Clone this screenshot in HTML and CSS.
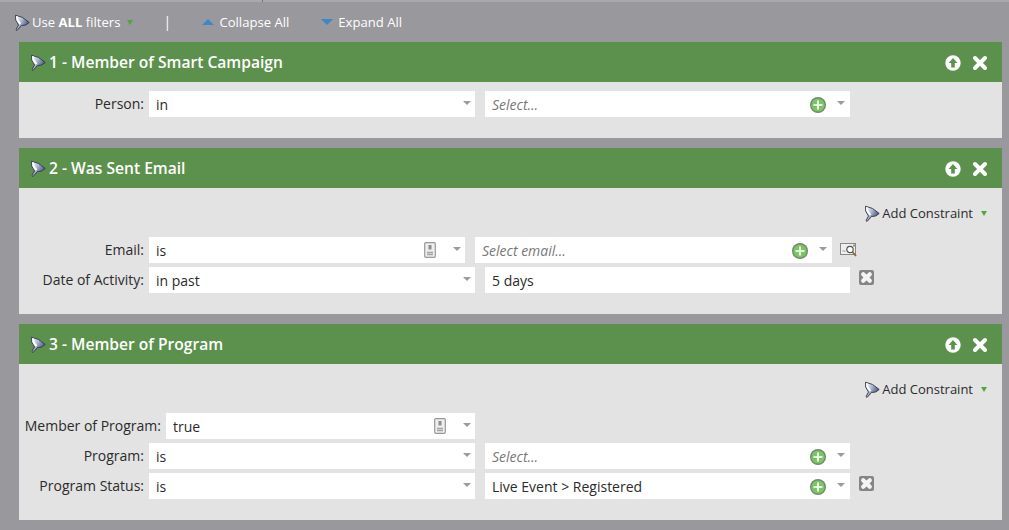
FILE: index.html
```html
<!DOCTYPE html>
<html lang="en">
<head>
<meta charset="utf-8">
<title>Smart List Filters</title>
<link rel="stylesheet" href="styles.css">
</head>
<body>
<svg class="defs" width="0" height="0" aria-hidden="true">
  <defs>
    <linearGradient id="fg" x1="0" y1="0" x2="1" y2=".6">
      <stop offset="0" stop-color="#ffffff"/><stop offset=".45" stop-color="#b4c0d6"/><stop offset="1" stop-color="#3a4a6e"/>
    </linearGradient>
    <symbol id="funnel" viewBox="0 0 16 17">
      <path d="M1.5 1.2 Q8.5 2 15.2 8.5 Q12 12 7.5 11.5 L3 16.5 L2 15.6 L4.5 11 Q.3 6 1.5 1.2Z" fill="url(#fg)" stroke="#30364a" stroke-width=".9" stroke-linejoin="round"/>
      <path d="M3 2.5 Q3 6.5 6.5 10" fill="none" stroke="#fff" stroke-width="1.8"/>
    </symbol>
    <symbol id="plus" viewBox="0 0 16 16">
      <circle cx="8" cy="8" r="8" fill="#74886e"/>
      <circle cx="8" cy="8" r="6.6" fill="#78c765"/>
      <path d="M8 3.5v9M3.5 8h9" stroke="#eafbe4" stroke-width="2"/>
    </symbol>
    <symbol id="doc" viewBox="0 0 12 16">
      <rect x=".7" y=".7" width="10.6" height="14.6" rx="1" fill="#eee" stroke="#999" stroke-width="1.2"/>
      <rect x="4.5" y="3" width="3" height="4.5" fill="#8d8d8d"/>
      <path d="M3 10.5h6M3 12.5h6" stroke="#a5a5a5" stroke-width="1.4"/>
    </symbol>
    <symbol id="up" viewBox="0 0 16 16">
      <circle cx="8" cy="8" r="7.7" fill="#fff"/>
      <path d="M8 3 L12.4 8 H9.8 V12.5 H6.2 V8 H3.6Z" fill="#5b914c"/>
    </symbol>
    <symbol id="close" viewBox="0 0 16 16">
      <path d="M3 3 L13 13 M13 3 L3 13" stroke="#fff" stroke-width="4" stroke-linecap="round"/>
    </symbol>
    <symbol id="picker" viewBox="0 0 18 16">
      <rect x=".5" y="1.5" width="15" height="11" fill="#efefef" stroke="#888"/>
      <path d="M2.5 9h3" stroke="#999"/>
      <circle cx="10" cy="7.5" r="3.2" fill="#fff" stroke="#555" stroke-width="1.2"/>
      <path d="M12.5 10 L16 14" stroke="#8a6a30" stroke-width="1.8"/>
      <rect x="13" y="2.5" width="2" height="2" fill="#8fa15a"/>
    </symbol>
    <symbol id="remove" viewBox="0 0 15 15">
      <rect x="0" y="0" width="15" height="15" rx="2" fill="#858585"/>
      <path d="M4.2 4.2 L10.8 10.8 M10.8 4.2 L4.2 10.8" stroke="#f4f4f4" stroke-width="4.2" stroke-linecap="round"/>
    </symbol>
  </defs>
</svg>

<div class="topstrip"></div>
<nav class="toolbar">
  <span class="tool tool-rule"><svg class="ic-funnel"><use href="#funnel"/></svg>Use&nbsp;<b>ALL</b>&nbsp;filters<i class="green-caret"></i></span>
  <span class="divider">|</span>
  <span class="tool tool-collapse"><i class="tri tri-up"></i>Collapse All</span>
  <span class="tool"><i class="tri tri-down"></i>Expand All</span>
</nav>

<main class="cards">
  <section class="card card-1">
    <header class="card-head">
      <svg class="ic-funnel"><use href="#funnel"/></svg><h2>1 - Member of Smart Campaign</h2>
      <svg class="ic-head"><use href="#up"/></svg><svg class="ic-head ic-close"><use href="#close"/></svg>
    </header>
    <div class="card-body">
      <div class="row">
        <label class="lbl">Person:</label>
        <div class="field w326"><span class="val">in</span><i class="caret"></i></div>
        <div class="field w365"><em class="ph">Select...</em><svg class="ic-plus"><use href="#plus"/></svg><i class="caret"></i></div>
      </div>
    </div>
  </section>

  <section class="card card-2">
    <header class="card-head">
      <svg class="ic-funnel"><use href="#funnel"/></svg><h2>2 - Was Sent Email</h2>
      <svg class="ic-head"><use href="#up"/></svg><svg class="ic-head ic-close"><use href="#close"/></svg>
    </header>
    <div class="card-body">
      <div class="constraint"><svg class="ic-funnel"><use href="#funnel"/></svg>Add Constraint<i class="green-caret"></i></div>
      <div class="row">
        <label class="lbl">Email:</label>
        <div class="field w316"><span class="val">is</span><svg class="ic-doc"><use href="#doc"/></svg><i class="caret"></i></div>
        <div class="field w357"><em class="ph">Select email...</em><svg class="ic-plus"><use href="#plus"/></svg><i class="caret"></i></div>
        <svg class="ic-picker"><use href="#picker"/></svg>
      </div>
      <div class="row">
        <label class="lbl">Date of Activity:</label>
        <div class="field w326"><span class="val">in past</span><i class="caret"></i></div>
        <div class="field w365"><span class="val">5 days</span></div>
        <svg class="ic-remove"><use href="#remove"/></svg>
      </div>
    </div>
  </section>

  <section class="card card-3">
    <header class="card-head">
      <svg class="ic-funnel"><use href="#funnel"/></svg><h2>3 - Member of Program</h2>
      <svg class="ic-head"><use href="#up"/></svg><svg class="ic-head ic-close"><use href="#close"/></svg>
    </header>
    <div class="card-body">
      <div class="constraint"><svg class="ic-funnel"><use href="#funnel"/></svg>Add Constraint<i class="green-caret"></i></div>
      <div class="row">
        <label class="lbl lbl-wide">Member of Program:</label>
        <div class="field w309"><span class="val">true</span><svg class="ic-doc"><use href="#doc"/></svg><i class="caret"></i></div>
      </div>
      <div class="row">
        <label class="lbl">Program:</label>
        <div class="field w326"><span class="val">is</span><i class="caret"></i></div>
        <div class="field w365"><em class="ph">Select...</em><svg class="ic-plus"><use href="#plus"/></svg><i class="caret"></i></div>
      </div>
      <div class="row">
        <label class="lbl">Program Status:</label>
        <div class="field w326"><span class="val">is</span><i class="caret"></i></div>
        <div class="field w365"><span class="val">Live Event &gt; Registered</span><svg class="ic-plus"><use href="#plus"/></svg><i class="caret"></i></div>
        <svg class="ic-remove"><use href="#remove"/></svg>
      </div>
    </div>
  </section>
</main>
</body>
</html>
```

FILE: styles.css
```css
* { box-sizing: border-box; }
html, body { margin: 0; height: 100%; }
body {
  background: #99989c;
  font-family: "Open Sans", "Noto Sans", sans-serif;
  font-size: 14px;
  line-height: 20px;
  color: #2b2b2b;
  overflow: hidden;
}
.defs { position: absolute; }
.topstrip {
  height: 2px;
  background: linear-gradient(to right, #a9a9ab 262px, #77767a 262px, #77767a 263px, #a9a9ab 263px);
}
.toolbar {
  height: 40px;
  display: flex;
  align-items: center;
  padding: 0 0 0 14px;
  color: #fff;
  font-size: 13.1px;
}
.toolbar .tool { display: flex; align-items: center; white-space: pre; }
.toolbar b { font-weight: 700; }
.toolbar .ic-funnel { margin-right: 2px; }
.divider { margin-left: 30px; width: 39px; color: #fff; font-size: 14px; }
.tool-collapse { margin-right: 32px; }
.ic-funnel { width: 16px; height: 17px; flex: none; }
.tri { display: inline-block; width: 0; height: 0; margin-right: 5px; }
.tri-up { border: 6px solid transparent; border-top: 0; border-bottom: 6px solid #3f86c5; }
.tri-down { border: 6px solid transparent; border-bottom: 0; border-top: 6px solid #3f86c5; }
.green-caret {
  display: inline-block; width: 0; height: 0; margin-left: 7px;
  border: 3.5px solid transparent; border-bottom: 0; border-top: 5px solid #55a53e;
}
.constraint .green-caret { margin-left: 8px; }
.cards { padding: 0 7px 0 19px; display: flex; flex-direction: column; gap: 10px; }
.card { background: #e3e3e3; }
.card-head {
  height: 40px;
  background: #5b914c;
  color: #fff;
  display: flex;
  align-items: center;
  padding: 0 14px 0 11px;
}
.card-head h2 { margin: 0 auto 0 3px; font-size: 15.6px; font-weight: 600; line-height: 22px; }
.ic-head { width: 16px; height: 16px; flex: none; margin-top: 1px; }
.ic-close { margin-left: 11px; }
.card-body { padding: 9px 0 0; }
.card-1 .card-body { height: 56px; }
.card-2 .card-body { height: 126px; }
.card-3 .card-body { height: 156px; }
.constraint {
  height: 40px;
  display: flex;
  align-items: center;
  justify-content: flex-end;
  padding: 0 15px 8px 0;
  font-size: 13px;
  color: #2b2b2b;
}
.constraint .ic-funnel { margin-right: 2px; }
.row { display: flex; align-items: center; height: 26px; margin-bottom: 4px; }
.lbl { width: 125px; flex: none; text-align: right; margin-right: 5px; font-size: 14px; padding-bottom: 1px; }
.lbl-wide { width: 142px; white-space: nowrap; }
.field {
  height: 26px;
  background: #fff;
  flex: none;
  display: flex;
  align-items: center;
  padding: 0 4px 0 7px;
  margin-right: 10px;
}
.w326 { width: 326px; }
.w365 { width: 365px; padding-right: 5px; }
.w316 { width: 316px; }
.w357 { width: 357px; margin-right: 8px; padding-right: 5px; }
.w309 { width: 309px; }
.val { font-size: 14px; margin-right: auto; margin-top: 2px; }
.ph { font-size: 14px; font-style: italic; color: #777; margin-right: auto; margin-top: 2px; }
.caret {
  display: inline-block; width: 0; height: 0; flex: none;
  margin-bottom: 3px;
  border: 4.5px solid transparent; border-bottom: 0; border-top: 4px solid #9b9b9b;
}
.ic-plus { width: 16px; height: 16px; flex: none; margin-right: 11px; margin-top: 1px; }
.ic-doc { width: 12px; height: 16px; flex: none; margin-right: 17px; }
.ic-picker { width: 18px; height: 16px; flex: none; }
.ic-remove { width: 15px; height: 15px; flex: none; margin: 0 0 6px -1px; }
```
